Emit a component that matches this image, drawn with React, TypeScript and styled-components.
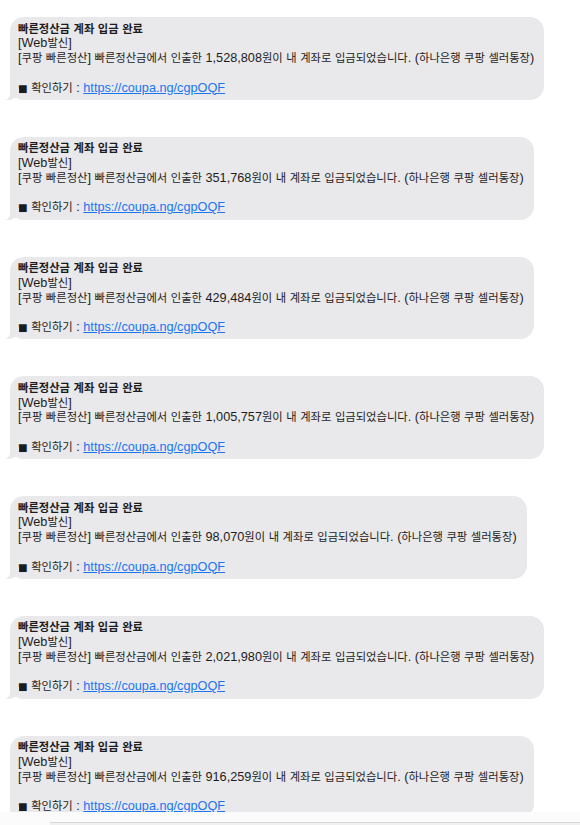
import * as React from "react";
import styled, { createGlobalStyle } from "styled-components";

const GlobalStyle = createGlobalStyle`
  html, body {
    margin: 0;
    padding: 0;
    background: #ffffff;
  }
  body {
    font-family: "Liberation Sans", "Noto Sans CJK KR", sans-serif;
    -webkit-font-smoothing: antialiased;
  }
`;

const BUBBLE_GRAY = "#e9e9eb";
const LINE = 14.75;

const SThread = styled.div`
  display: flex;
  flex-direction: column;
  align-items: flex-start;
  gap: 37px;
  padding: 17px 0 40px 10px;
  height: 825px;
  box-sizing: border-box;
  overflow: hidden;
`;

const SBubble = styled.div`
  position: relative;
  background: ${BUBBLE_GRAY};
  border-radius: 14px;
  padding: 4.5px 10px 4.5px 8px;
  color: #1c1c1e;
  font-size: 12.7px;
  line-height: ${LINE}px;
  white-space: nowrap;
  flex-shrink: 0;

  &::before {
    content: "";
    position: absolute;
    left: -5px;
    bottom: 0;
    width: 14px;
    height: 12px;
    background: ${BUBBLE_GRAY};
    border-bottom-right-radius: 10px 9px;
  }

  &::after {
    content: "";
    position: absolute;
    left: -10px;
    bottom: 0;
    width: 10px;
    height: 12px;
    background: #ffffff;
    border-bottom-right-radius: 6px;
  }
`;

const SLine = styled.div`
  height: ${LINE}px;
`;

const STitle = styled(SLine)`
  font-weight: 700;
`;

// hangul runs are set a touch smaller so they sit at the same width as the reference
const SKo = styled.span`
  font-family: "Noto Sans CJK KR", sans-serif;
  font-size: 0.89em;
  line-height: 1;
`;

const SBullet = styled.span`
  font-family: "DejaVu Sans", sans-serif;
  font-size: 0.8em;
  line-height: 1;
`;

const SLink = styled.a`
  color: #1976f2;
  text-decoration: underline;
`;

const SFooter = styled.div`
  position: fixed;
  left: 0;
  right: 0;
  bottom: 0;
  height: 13px;
  background: #fbfbfb;
  display: flex;
  align-items: flex-end;
`;

const SFooterEdge = styled.div`
  margin-left: 50px;
  flex: 1;
  height: 2px;
  border-top: 1px solid #d9d9d9;
  background: #f0f0f0;
`;

const Txt = ({ text }: { text: string }) => (
  <React.Fragment>
    {text
      .split(/([\uAC00-\uD7A3]+)/)
      .map((part, i) => (i % 2 ? <SKo key={i}>{part}</SKo> : part))}
  </React.Fragment>
);

const amounts = [
  "1,528,808",
  "351,768",
  "429,484",
  "1,005,757",
  "98,070",
  "2,021,980",
  "916,259",
];

const Message = ({ amount }: { amount: string }) => (
  <SBubble>
    <STitle>
      <Txt text="빠른정산금 계좌 입금 완료" />
    </STitle>
    <SLine>
      <Txt text="[Web발신]" />
    </SLine>
    <SLine>
      <Txt
        text={`[쿠팡 빠른정산] 빠른정산금에서 인출한 ${amount}원이 내 계좌로 입금되었습니다. (하나은행 쿠팡 셀러통장)`}
      />
    </SLine>
    <SLine />
    <SLine>
      <SBullet>■</SBullet> <Txt text="확인하기 : " />
      <SLink href="#">https://coupa.ng/cgpOQF</SLink>
    </SLine>
  </SBubble>
);

const App = () => (
  <React.Fragment>
    <GlobalStyle />
    <SThread>
      {amounts.map((a, i) => (
        <Message key={i} amount={a} />
      ))}
    </SThread>
    <SFooter>
      <SFooterEdge />
    </SFooter>
  </React.Fragment>
);

export default App;
